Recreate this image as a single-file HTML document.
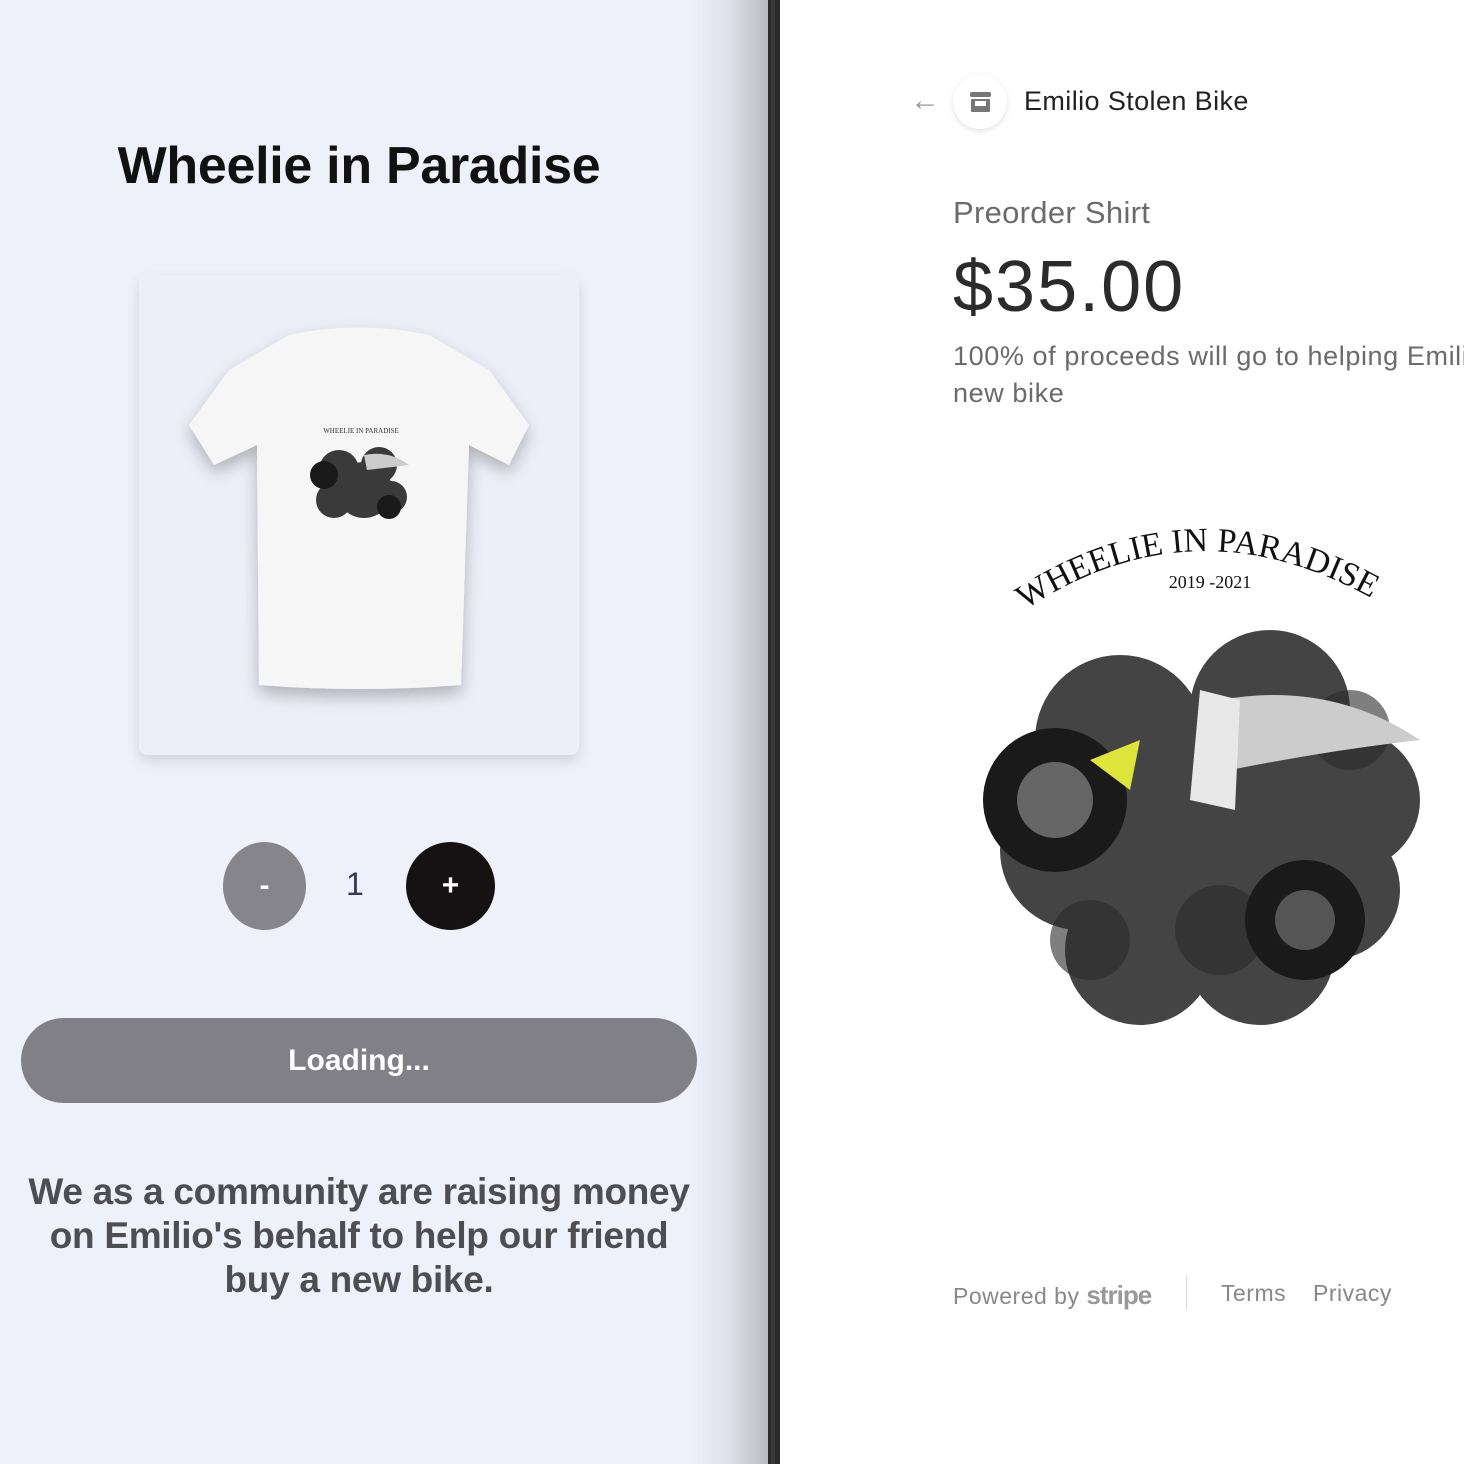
<!DOCTYPE html>
<html><head><meta charset="utf-8"><style>
body{margin:0;width:1464px;height:1464px;overflow:hidden;font-family:"Liberation Sans",sans-serif;position:relative;background:#fff}
.left{position:absolute;left:0;top:0;width:770px;height:1464px;background:linear-gradient(90deg,#eef0fa 0,#eef0fa 690px,#dfe1ea 730px,#b8bac2 768px)}
.bar{position:absolute;left:768px;top:0;width:12px;height:1464px;background:#2a2a2a}
.bar:after{content:"";position:absolute;left:3px;top:0;width:4px;height:100%;background:#3a3a3a}
h1{position:absolute;left:0;width:718px;top:136px;margin:0;text-align:center;font-size:52px;font-weight:bold;color:#111;letter-spacing:-0.3px}
.card{position:absolute;left:139px;top:275px;width:440px;height:480px;background:#eceef8;border-radius:8px;box-shadow:0 6px 14px rgba(0,0,0,.12)}
.circ{position:absolute;border-radius:50%;display:flex;align-items:center;justify-content:center;font-weight:bold;font-size:30px}
.btn{position:absolute;left:21px;top:1018px;width:676px;height:85px;border-radius:43px;background:#818087;color:#fff;font-size:30px;font-weight:bold;display:flex;align-items:center;justify-content:center}
.desc{position:absolute;left:0;width:718px;top:1170px;text-align:center;font-size:37px;font-weight:bold;color:#4d4d52;line-height:44px;letter-spacing:-0.3px}
.r{position:absolute;color:#333}
</style></head><body>
<div class="left"></div>
<div class="bar"></div>
<h1>Wheelie in Paradise</h1>
<div class="card">
<svg width="440" height="480" viewBox="0 0 440 480">
<defs><filter id="s"><feDropShadow dx="0" dy="8" stdDeviation="8" flood-opacity=".25"/></filter></defs>
<path filter="url(#s)" d="M150 60 Q220 45 290 60 L350 95 L390 150 L370 190 L330 170 L322 410 Q220 418 120 410 L118 170 L75 190 L50 150 L90 95 Z" fill="#f6f6f6"/>
<text x="222" y="158" font-size="7" text-anchor="middle" fill="#333" font-family="Liberation Serif">WHEELIE IN PARADISE</text>
<g fill="#3a3a3a"><circle cx="200" cy="195" r="20"/><circle cx="240" cy="190" r="18"/><circle cx="225" cy="215" r="28"/><circle cx="195" cy="225" r="18"/><circle cx="252" cy="222" r="16"/></g>
<circle cx="185" cy="200" r="14" fill="#1a1a1a"/><circle cx="250" cy="232" r="12" fill="#1a1a1a"/>
<path d="M225 180 Q250 175 270 190 L228 195 Z" fill="#ccc"/>
</svg></div>
<div class="circ" style="left:223px;top:842px;width:83px;height:88px;background:#86858b;color:#fff">-</div>
<div style="position:absolute;left:346px;top:866px;font-size:32px;color:#333a5a">1</div>
<div class="circ" style="left:406px;top:842px;width:89px;height:88px;background:#161213;color:#fff">+</div>
<div class="btn">Loading...</div>
<div class="desc">We as a community are raising money<br>on Emilio's behalf to help our friend<br>buy a new bike.</div>

<div class="r" style="left:910px;top:84px;font-size:30px;color:#999">&#8592;</div>
<div style="position:absolute;left:953px;top:75px;width:54px;height:54px;border-radius:50%;background:#fff;box-shadow:0 2px 6px rgba(0,0,0,.12)"><div style="position:absolute;left:17px;top:17px;width:21px;height:5px;background:#777;border-radius:2px"></div><div style="position:absolute;left:18px;top:24px;width:19px;height:13px;background:#777;border-radius:1px"></div><div style="position:absolute;left:22px;top:26px;width:11px;height:5px;background:#fff"></div></div>
<div class="r" style="left:1024px;top:86px;font-size:27px;color:#222;letter-spacing:0.4px">Emilio Stolen Bike</div>
<div class="r" style="left:953px;top:195px;font-size:31px;color:#6b6b6b;letter-spacing:0.3px">Preorder Shirt</div>
<div class="r" style="left:953px;top:246px;font-size:72px;color:#2b2b2b;letter-spacing:2px">$35.00</div>
<div class="r" style="left:953px;top:338px;font-size:27px;color:#6b6b6b;line-height:37px;white-space:nowrap;letter-spacing:0.6px">100% of proceeds will go to helping Emilio<br>new bike</div>
<svg style="position:absolute;left:970px;top:510px" width="470" height="530" viewBox="0 0 470 530">
<path id="arc" d="M55 100 Q235 -20 430 105" fill="none"/>
<text font-family="Liberation Serif" font-size="34" fill="#111"><textPath href="#arc">WHEELIE IN PARADISE</textPath></text>
<text x="240" y="78" font-family="Liberation Serif" font-size="18" text-anchor="middle" fill="#111">2019 -2021</text>
<g fill="#444">
<circle cx="150" cy="230" r="85"/><circle cx="300" cy="200" r="80"/><circle cx="380" cy="290" r="70"/><circle cx="110" cy="340" r="80"/>
<circle cx="170" cy="440" r="75"/><circle cx="290" cy="440" r="75"/><circle cx="230" cy="320" r="110"/><circle cx="360" cy="380" r="70"/></g>
<g fill="#2a2a2a" opacity=".6"><circle cx="120" cy="430" r="40"/><circle cx="250" cy="420" r="45"/><circle cx="380" cy="220" r="40"/></g>
<circle cx="85" cy="290" r="72" fill="#1a1a1a"/><circle cx="85" cy="290" r="38" fill="#666"/>
<circle cx="335" cy="410" r="60" fill="#1a1a1a"/><circle cx="335" cy="410" r="30" fill="#555"/>
<path d="M250 190 Q360 170 450 230 Q360 240 260 260 Z" fill="#ccc"/>
<path d="M120 250 L170 230 L160 280 Z" fill="#dde43a"/>
<path d="M230 180 L270 190 L265 300 L220 290 Z" fill="#e8e8e8"/>
</svg>
<div class="r" style="left:953px;top:1280px;font-size:23px;color:#888;letter-spacing:0.5px">Powered by <b style="color:#999;font-size:26px;letter-spacing:-1px">stripe</b></div>
<div style="position:absolute;left:1186px;top:1275px;width:1px;height:35px;background:#ddd"></div>
<div class="r" style="left:1221px;top:1280px;font-size:23px;color:#888;letter-spacing:0.5px">Terms</div>
<div class="r" style="left:1313px;top:1280px;font-size:23px;color:#888;letter-spacing:0.5px">Privacy</div>
</body></html>
